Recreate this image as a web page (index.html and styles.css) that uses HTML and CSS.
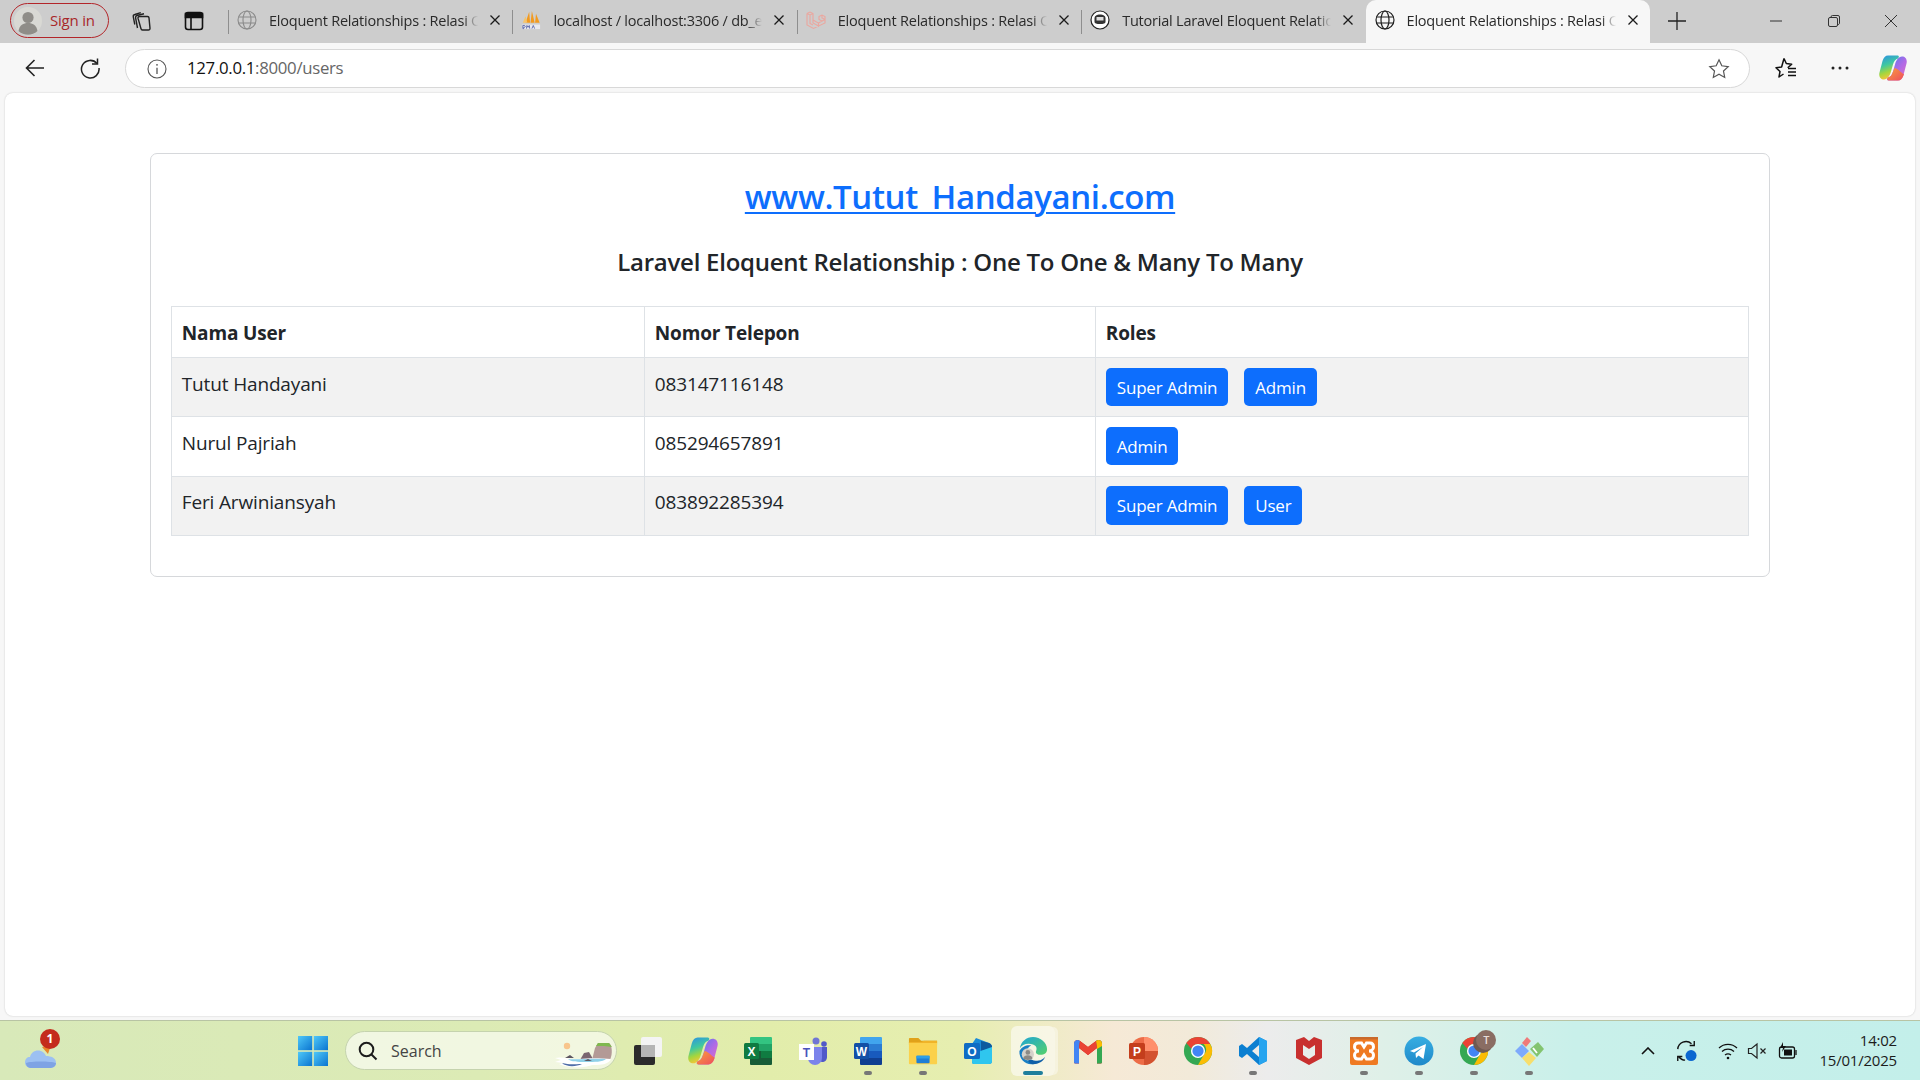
FILE: index.html
```html
<!DOCTYPE html>
<html lang="id">
<head>
<meta charset="utf-8">
<title>Eloquent Relationships</title>
<link rel="stylesheet" href="styles.css">
</head>
<body>
<div class="tabstrip">
  <div class="signin">
    <svg class="avatar" viewBox="0 0 28 28"><circle cx="14" cy="14" r="14" fill="#d9d9d4"/><circle cx="14" cy="10.5" r="5.6" fill="#8f8d88"/><path d="M4.500 24c1-6 5-8 9.500-8s8.500 2 9.500 8a14 14 0 0 1-19 0z" fill="#8f8d88"/></svg>
    <span class="signin-text">Sign in</span>
  </div>
  <svg class="tool tool-coll" viewBox="0 0 24 24" fill="none" stroke="#222" stroke-width="1.400"><path d="M9.500 7.500h8a1.500 1.500 0 0 1 1.500 1.400l1 10.500a1.500 1.500 0 0 1-1.500 1.600h-6a1.500 1.500 0 0 1-1.500-1.300L8 9.200a1.500 1.500 0 0 1 1.500-1.700z"/><path d="M7.500 19 5.600 8.800A2 2 0 0 1 7 6.500l7-1.700M4.800 15.500 3.300 7.800a2 2 0 0 1 1.500-2.300l6-1.800"/></svg>
  <svg class="tool tool-vert" viewBox="0 0 24 24" fill="none" stroke="#111" stroke-width="1.600"><rect x="3.500" y="3.500" width="17" height="17" rx="2.500"/><path d="M3.500 4.500h17v4h-17z" fill="#111"/><path d="M9 8v12"/></svg>
  <div class="tab">
    <svg class="fav" viewBox="0 0 20 20" fill="none" stroke="#8a8a8a" stroke-width="1.100"><circle cx="10" cy="10" r="9"/><ellipse cx="10" cy="10" rx="4" ry="9"/><path d="M1.500 7h17M1.500 13h17"/></svg>
    <span class="tab-title">Eloquent Relationships : Relasi One To One</span>
    <svg class="tab-x" viewBox="0 0 12 12"><path d="M1.500 1.500l9 9m0-9l-9 9" stroke="#1a1a1a" stroke-width="1.300"/></svg>
  </div>
  <div class="tab">
    <svg class="fav" viewBox="0 0 22 22"><path d="M5 14 9 2l1 12zM10.500 14l1.500-13 3 13zM15.500 14l1-10 4 10z" fill="#f29a1f"/><path d="M2 14 5 7l2 7z" fill="#f7c469"/><path d="M1 16h20v5H1z" fill="#e9e9ee"/><path d="M2 20.500V17h2l.7 1-.7 1H3v1.500zM6 20.500 6.500 17l1.300 2 1.300-2 .5 3.500M12 20.500l1.500-3.500 1.500 3.500" fill="none" stroke="#3a4a9a" stroke-width=".8"/></svg>
    <span class="tab-title">localhost / localhost:3306 / db_eloquent</span>
    <svg class="tab-x" viewBox="0 0 12 12"><path d="M1.500 1.500l9 9m0-9l-9 9" stroke="#1a1a1a" stroke-width="1.300"/></svg>
  </div>
  <div class="tab">
    <svg class="fav" viewBox="0 0 20 20" fill="none" stroke="#eba79f" stroke-width="1.100"><path d="M1 3.500 4 2l3 1.500V13l5.500 3V13l-5.500-3M1 3.500V15l6.500 3.500L19 13V9.500l-6.500 3.500M7 3.500 4 5 1 3.500M4 5v8.500l3 1.500M13 6.500 16 5l3 1.500v3l-3 1.500-3-1.500zM16 5v3l3 1.500M13 6.500V9.500l3 1.500"/></svg>
    <span class="tab-title">Eloquent Relationships : Relasi One To One</span>
    <svg class="tab-x" viewBox="0 0 12 12"><path d="M1.500 1.500l9 9m0-9l-9 9" stroke="#1a1a1a" stroke-width="1.300"/></svg>
  </div>
  <div class="tab">
    <svg class="fav" viewBox="0 0 20 20"><circle cx="10" cy="10" r="9" fill="#fff" stroke="#222" stroke-width="1.200"/><path d="M4.500 8.500C4.500 5.500 7 4.500 10 4.500s5.500 1 5.500 4V12c0 1.500-2 2-5.500 2s-5.500-.5-5.500-2z" fill="#333"/><rect x="6.500" y="7" width="7" height="3.500" fill="#ddd"/></svg>
    <span class="tab-title">Tutorial Laravel Eloquent Relationship</span>
    <svg class="tab-x" viewBox="0 0 12 12"><path d="M1.500 1.500l9 9m0-9l-9 9" stroke="#1a1a1a" stroke-width="1.300"/></svg>
  </div>
  <div class="tab tab-active">
    <svg class="fav" viewBox="0 0 20 20" fill="none" stroke="#1e1e1e" stroke-width="1.200"><circle cx="10" cy="10" r="9"/><ellipse cx="10" cy="10" rx="4" ry="9"/><path d="M1.500 7h17M1.500 13h17"/></svg>
    <span class="tab-title">Eloquent Relationships : Relasi One To One</span>
    <svg class="tab-x" viewBox="0 0 12 12"><path d="M1.500 1.500l9 9m0-9l-9 9" stroke="#1a1a1a" stroke-width="1.300"/></svg>
  </div>
  <svg class="newtab" viewBox="0 0 18 18"><path d="M9 0v18M0 9h18" stroke="#222" stroke-width="1.300"/></svg>
  <div class="winctl">
    <svg viewBox="0 0 14 14"><path d="M1 7h12" stroke="#333" stroke-width="1"/></svg>
    <svg viewBox="0 0 14 14" fill="none" stroke="#333" stroke-width="1"><rect x="1.500" y="3.500" width="9" height="9" rx="1.500"/><path d="M4 3.500V3a1.500 1.500 0 0 1 1.500-1.500H11A1.500 1.500 0 0 1 12.500 3v6a1.500 1.500 0 0 1-2 1.500"/></svg>
    <svg viewBox="0 0 14 14"><path d="M1 1l12 12m0-12L1 13" stroke="#333" stroke-width="1"/></svg>
  </div>
</div>

<div class="toolbar">
  <svg class="nav nav-back" viewBox="0 0 22 22"><path d="M20 11H2.500M10.500 3l-8 8 8 8" fill="none" stroke="#222" stroke-width="1.600"/></svg>
  <svg class="nav nav-reload" viewBox="0 0 22 22" fill="none" stroke="#222" stroke-width="1.500"><path d="M18 6.500A8.800 8.800 0 1 0 20 11"/><path d="M18.500 1.500v5.500H13"/></svg>
  <div class="omnibox">
    <svg class="info" viewBox="0 0 20 20" fill="none" stroke="#555" stroke-width="1.100"><circle cx="10" cy="10" r="9"/><path d="M10 8.800V15" stroke-width="1.300"/><circle cx="10" cy="5.800" r=".9" fill="#555" stroke="none"/></svg>
    <span class="url"><span class="url-host">127.0.0.1</span>:8000/users</span>
    <svg class="star" viewBox="0 0 22 22" fill="none" stroke="#555" stroke-width="1.200"><path d="M11 1.800l2.800 6 6.400.8-4.700 4.400 1.200 6.400-5.700-3.200-5.700 3.200 1.200-6.400L1.800 8.600l6.400-.8z"/></svg>
  </div>
  <svg class="nav nav-favs" viewBox="0 0 24 24" fill="none" stroke="#111" stroke-width="1.500"><path d="M10 2.500l2.300 5 5.400.7-4 3.600M9.500 18l-4.500 3 1-5.500-4-3.800 5.600-.7L10 2.500" stroke-linejoin="round"/><path d="M14 12.500h8M14 16h8M14 19.500h8"/></svg>
  <svg class="nav nav-more" viewBox="0 0 20 6"><circle cx="3" cy="3" r="1.500" fill="#222"/><circle cx="10" cy="3" r="1.500" fill="#222"/><circle cx="17" cy="3" r="1.500" fill="#222"/></svg>
  <svg class="nav nav-copilot" viewBox="0 0 28 26"><defs><linearGradient id="cp1" x1="0" y1="0" x2=".3" y2="1"><stop offset="0" stop-color="#2a8ee8"/><stop offset=".45" stop-color="#3fc8a0"/><stop offset=".75" stop-color="#a6d63c"/><stop offset="1" stop-color="#f4c53a"/></linearGradient><linearGradient id="cp2" x1="0" y1="0" x2="1" y2="1"><stop offset="0" stop-color="#3f7cf0"/><stop offset=".55" stop-color="#b06ae6"/><stop offset="1" stop-color="#e86fc0"/></linearGradient><linearGradient id="cp3" x1="0" y1="0" x2="1" y2="1"><stop offset="0" stop-color="#f9a13a"/><stop offset="1" stop-color="#ee4d5f"/></linearGradient></defs><path d="M9 .5h9c2 0 2.500 1.500 1 3-2.500.5-4 2.500-5 6l-2 7c-1 4-3.500 8-7 8-3.500 0-5.500-3-4.500-7L3.500 6C4.500 2.500 6.500.5 9 .5z" fill="url(#cp1)"/><path d="M19 25.500h-9c-2 0-2.500-1.500-1-3 2.500-.5 4-2.500 5-6l2-7c1-4 3.500-8 7-8 3.500 0 5.500 3 4.500 7L24.500 20c-1 3.500-3 5.500-5.500 5.500z" fill="url(#cp2)"/><path d="M15.500 13l-1.500 3.500c-1 3.500-2.500 5.500-5 6-1.500 1.500-1 3 1 3h9c2.500 0 4.500-2 5.500-5l.5-1.500c-2 0-5-5-9.500-6z" fill="url(#cp3)"/></svg>
</div>

<main class="viewport">
  <section class="card">
    <h2 class="brand"><a href="#">www.Tutut_Handayani.com</a></h2>
    <h4 class="subtitle">Laravel Eloquent Relationship : One To One &amp; Many To Many</h4>
    <table class="users">
      <colgroup><col class="c1"><col class="c2"><col></colgroup>
      <thead><tr><th>Nama User</th><th>Nomor Telepon</th><th>Roles</th></tr></thead>
      <tbody>
        <tr><td>Tutut Handayani</td><td>083147116148</td><td><span class="badge">Super Admin</span><span class="badge">Admin</span></td></tr>
        <tr><td>Nurul Pajriah</td><td>085294657891</td><td><span class="badge">Admin</span></td></tr>
        <tr><td>Feri Arwiniansyah</td><td>083892285394</td><td><span class="badge">Super Admin</span><span class="badge">User</span></td></tr>
      </tbody>
    </table>
  </section>
</main>

<footer class="taskbar">
  <div class="weather">
    <svg viewBox="0 0 32 36"><path d="M17 12l9-2-3 9z" fill="#e8862c"/><path d="M7 33c-4 0-7-2-7-5.500s2-5.500 5-5.500c1-4 4-6.500 8-6.500s7 2.500 8 5.500c5 0 10 2 10 6.500s-3 5.500-7 5.500z" fill="#9cc0f2"/><path d="M1 28c5-2 24-2 30 0 0 3-3 5-7 5H7c-4 0-6-2-6-5z" fill="#7ea3e4"/></svg>
    <span class="weather-badge">1</span>
  </div>
  <svg class="start" viewBox="0 0 30 30"><defs><linearGradient id="st" x1="0" y1="0" x2="1" y2="1"><stop offset="0" stop-color="#4fc8f8"/><stop offset="1" stop-color="#0a74d0"/></linearGradient></defs><rect width="14.200" height="14.200" y="0" fill="url(#st)"/><rect x="15.800" width="14.200" height="14.200" fill="url(#st)"/><rect y="15.800" width="14.200" height="14.200" fill="url(#st)"/><rect x="15.800" y="15.800" width="14.200" height="14.200" fill="url(#st)"/></svg>
  <div class="search">
    <svg class="search-ico" viewBox="0 0 20 20" fill="none" stroke="#1c1c1c" stroke-width="2"><circle cx="8.500" cy="8.500" r="6.800"/><path d="M13.500 13.500l5 5"/></svg>
    <span>Search</span>
    <svg class="scene" viewBox="0 0 60 27"><circle cx="13" cy="5" r="3.200" fill="#f8c58c"/><path d="M26 19l4-7 5-1 4 7z" fill="#7a6670"/><path d="M38 19l3-12 3-5h11c3 2 4 10 1 17z" fill="#b39a96"/><path d="M42 5l2-3h11l3 4-8-1z" fill="#7fb84e"/><path d="M1 17c8-2 16 2 24 1s22-1 32 0c-2 5-9 6-18 6-5 1-9 3-20 2-5 0-10-1-14-3l5-1-9-1 6-2z" fill="#fff"/><path d="M14 18c8 1 30-1 38 0-3 3-12 3-20 3s-15 0-18-3z" fill="#8fd0e8"/><path d="M8 22c8 2 12 1 20 1-6 3-16 3-20-1z" fill="#4f6da8"/><path d="M11 17l5-3 4 3zM30 20l4-2 4 2z" fill="#5c5560"/></svg>
  </div>
  <div class="apps">
    <div class="app"><svg viewBox="0 0 30 30"><rect x="1" y="9" width="21" height="20" rx="2" fill="#2b2b2b"/><rect x="8" y="1" width="21" height="20" rx="2" fill="#f4f4f4"/><rect x="8" y="9" width="14" height="12" fill="#b5b5b5"/></svg></div>
    <div class="app"><svg viewBox="0 0 28 26"><path d="M9 .5h9c2 0 2.500 1.500 1 3-2.500.5-4 2.500-5 6l-2 7c-1 4-3.500 8-7 8-3.500 0-5.500-3-4.500-7L3.500 6C4.500 2.500 6.500.5 9 .5z" fill="url(#cp1)"/><path d="M19 25.500h-9c-2 0-2.500-1.500-1-3 2.500-.5 4-2.500 5-6l2-7c1-4 3.500-8 7-8 3.500 0 5.500 3 4.500 7L24.500 20c-1 3.500-3 5.500-5.500 5.500z" fill="url(#cp2)"/><path d="M15.500 13l-1.500 3.500c-1 3.500-2.500 5.500-5 6-1.500 1.500-1 3 1 3h9c2.500 0 4.500-2 5.500-5l.5-1.500c-2 0-5-5-9.500-6z" fill="url(#cp3)"/></svg></div>
    <div class="app"><svg viewBox="0 0 30 30"><path d="M8 1h20a1 1 0 0 1 1 1v6H7V2a1 1 0 0 1 1-1z" fill="#33c481"/><path d="M7 8h22v7H7z" fill="#21a366"/><path d="M18 15h11v7H18z" fill="#107c41"/><path d="M7 15h11v7H7zM7 22h22v6a1 1 0 0 1-1 1H8a1 1 0 0 1-1-1z" fill="#185c37"/><rect x="1" y="7" width="15" height="16" rx="1.500" fill="#0f7b41"/><text x="8.500" y="19.500" class="ltr">X</text></svg></div>
    <div class="app"><svg viewBox="0 0 30 30"><circle cx="18" cy="5" r="3.500" fill="#6f76d4"/><circle cx="26" cy="8" r="2.800" fill="#5059c9"/><path d="M21 11h8v10c0 3-2 5-5 5-1 0-3-1-3-2z" fill="#5059c9"/><path d="M10 11h14v11a7 7 0 0 1-14 0z" fill="#7b83eb"/><rect x="1" y="8" width="15" height="16" fill="#fff"/><text x="8.500" y="20.500" class="ltr ltr-t">T</text></svg></div>
    <div class="app"><svg viewBox="0 0 30 30"><path d="M8 1h20a1 1 0 0 1 1 1v6H7V2a1 1 0 0 1 1-1z" fill="#41a5ee"/><path d="M7 8h22v7H7z" fill="#2b7cd3"/><path d="M7 15h22v7H7z" fill="#185abd"/><path d="M7 22h22v6a1 1 0 0 1-1 1H8a1 1 0 0 1-1-1z" fill="#103f91"/><rect x="1" y="7" width="15" height="16" rx="1.500" fill="#134fa6"/><text x="8.500" y="19.500" class="ltr">W</text></svg><i class="dot"></i></div>
    <div class="app"><svg viewBox="0 0 32 32"><path d="M1 3a1 1 0 0 1 1-1h9l3 3h17v4H1z" fill="#e0a21a"/><path d="M1 7h30v22a1 1 0 0 1-1 1H2a1 1 0 0 1-1-1z" fill="#fbd14b"/><path d="M1 6.500h13l3-1.500h14v2.500H1z" fill="#f0b429"/><rect x="9" y="21" width="14" height="8" rx="1" fill="#1f7fd6"/><rect x="9" y="21" width="14" height="3" fill="#2e9fe8"/></svg><i class="dot"></i></div>
    <div class="app"><svg viewBox="0 0 30 30"><path d="M13 2 26 7c2 1 3 2 3 4v14c0 2-1 3-3 3H11c-2 0-2-2-2-3V8z" fill="#1a8bd8"/><path d="M18 5l8 2c2 1 3 2 3 4v1l-11 3z" fill="#0e5a9e"/><path d="M9 18l20-7v14c0 2-1 3-3 3H11c-2 0-2-2-2-3z" fill="#2fc6ee"/><rect x="1" y="7" width="16" height="16" rx="1.500" fill="#0f6cc4"/><text x="9" y="20" class="ltr">O</text></svg></div>
    <div class="app app-active"><svg viewBox="0 0 32 32"><defs><linearGradient id="ed1" x1="0" y1="0" x2="1" y2="1"><stop offset="0" stop-color="#1fa5d6"/><stop offset="1" stop-color="#54d16a"/></linearGradient></defs><path d="M2 13C3 6 9 1 16 1c8 0 15 6 15 13 0 4-3 6-7 6-3 0-5-1-5-3 1-3 2-6-3-8C10 7 4 9 2 13z" fill="url(#ed1)"/><path d="M16 30C8 31 1 25 1.500 16 4 11 10 9 14 10c-5 2-6 9-3 13 1 3 4 6 9 6z" fill="#1a7fc4"/><path d="M11 23c3 3 7 4 11 3 3 0 5-2 7-4-2 5-7 8-13 8-3 0-6-2-5-7z" fill="#0f5fa8"/><circle cx="10.500" cy="19.500" r="6.500" fill="#d4d1ca"/><circle cx="10.500" cy="17.500" r="2.500" fill="#8c8a85"/><path d="M5.500 24c.5-2.500 2.500-3.500 5-3.500s4.500 1 5 3.500c-2 2-8 2-10 0z" fill="#8c8a85"/></svg><i class="dot dot-long"></i></div>
    <div class="app"><svg viewBox="0 0 30 26"><path d="M1 5.500C1 2.500 4.500 1 7 3l8 6 8-6c2.500-2 6-.5 6 2.500V24a1.500 1.500 0 0 1-1.500 1.500H24V10l-9 7-9-7v15.500H2.500A1.500 1.500 0 0 1 1 24z" fill="#c5221f"/><path d="M1 5.500C1 2.500 4.500 1 7 3l-1 7v15.500H2.500A1.500 1.500 0 0 1 1 24z" fill="#4285f4"/><path d="M29 5.500C29 2.500 25.500 1 23 3l1 7v15.500h3.500A1.500 1.500 0 0 0 29 24z" fill="#34a853"/><path d="M23 3c2.500-2 6-.5 6 2.500V8l-5 3z" fill="#fbbc04"/><path d="M7 3l8 6 8-6 1 7-9 7-9-7z" fill="#ea4335"/></svg></div>
    <div class="app"><svg viewBox="0 0 30 30"><circle cx="16" cy="15" r="14" fill="#ed6c47"/><path d="M16 1a14 14 0 0 1 14 14H16z" fill="#ff8f6b"/><path d="M16 15h14a14 14 0 0 1-14 14z" fill="#d35230"/><rect x="1" y="7" width="16" height="16" rx="1.500" fill="#c43e1c"/><text x="9" y="20" class="ltr">P</text></svg></div>
    <div class="app"><svg viewBox="0 0 32 32"><circle cx="16" cy="16" r="15" fill="#34a853"/><path d="M16 1a15 15 0 0 1 13 7.500H16a7.500 7.500 0 0 0-7 5L3.500 7.500A15 15 0 0 1 16 1z" fill="#ea4335"/><path d="M29 8.500A15 15 0 0 1 16 31l6.500-11.500A7.500 7.500 0 0 0 22 8.500z" fill="#fbbc04"/><circle cx="16" cy="16" r="7.500" fill="#fff"/><circle cx="16" cy="16" r="6" fill="#4285f4"/></svg></div>
    <div class="app"><svg viewBox="0 0 30 30"><path d="M21 1l8 4v20l-8 4-12-11-5 4-3-2V10l3-2 5 4zM21 9l-7 6 7 6z" fill="#0b7fd1"/><path d="M21 1l8 4v20l-8 4z" fill="#27a4ef"/></svg><i class="dot"></i></div>
    <div class="app"><svg viewBox="0 0 28 30"><path fill-rule="evenodd" d="M1 4l8-3 5 4 5-4 8 3v18l-13 7-13-7zM8 9v10l6 4 6-4V9l-6 4z" fill="#c8302f"/></svg></div>
    <div class="app"><svg viewBox="0 0 30 30"><rect x="1" y="1" width="28" height="28" rx="2" fill="#ef7a22"/><rect x="1" y="1" width="28" height="2.500" fill="#c96a2c"/><path d="M9 7h3.500L15 11l2.500-4H21c2.500 0 3.500 2 3.500 4s-2 4-4.500 4c2.500 0 4.500 2 4.500 4s-1 4-3.500 4h-3.500L15 19l-2.500 4H9c-2.500 0-3.500-2-3.500-4s2-4 4.500-4c-2.500 0-4.500-2-4.500-4s1-4 3.500-4z" fill="none" stroke="#fff" stroke-width="3"/></svg><i class="dot"></i></div>
    <div class="app"><svg viewBox="0 0 30 30"><defs><linearGradient id="tg" x1="0" y1="0" x2="0" y2="1"><stop offset="0" stop-color="#37aee2"/><stop offset="1" stop-color="#1e88c9"/></linearGradient></defs><circle cx="15" cy="15" r="14.500" fill="url(#tg)"/><path d="M6 15l16-7-2.500 15-5-3.500-2.500 2.500-.5-4.500 7.500-6.500-9 5.500z" fill="#fff"/></svg><i class="dot"></i></div>
    <div class="app"><svg viewBox="0 0 32 32"><circle cx="16" cy="16" r="15" fill="#34a853"/><path d="M16 1a15 15 0 0 1 13 7.500H16a7.500 7.500 0 0 0-7 5L3.500 7.500A15 15 0 0 1 16 1z" fill="#ea4335"/><path d="M29 8.500A15 15 0 0 1 16 31l6.500-11.500A7.500 7.500 0 0 0 22 8.500z" fill="#fbbc04"/><circle cx="16" cy="16" r="7.500" fill="#fff"/><circle cx="16" cy="16" r="6" fill="#4285f4"/></svg><span class="t-badge">T</span><i class="dot"></i></div>
    <div class="app"><svg viewBox="0 0 30 30"><path d="M1 15l7-7 7 7-7 7z" fill="#7eaafb"/><path d="M8 7l5-6 4 4-5 6z" fill="#ef7a7a"/><path d="M16 13l8-7 6 7-7 8z" fill="#83c46f"/><path d="M8 22l7-6 7 6-7 8z" fill="#f7de6c"/><path d="M19 12l4 5" stroke="#fff" stroke-width="1.800"/></svg><i class="dot"></i></div>
  </div>
  <div class="tray">
    <svg class="tray-chev" viewBox="0 0 14 8"><path d="M1 7l6-6 6 6" fill="none" stroke="#111" stroke-width="1.600"/></svg>
    <svg class="tray-sync" viewBox="0 0 24 26" fill="none" stroke="#111" stroke-width="1.500"><path d="M3 11A9 9 0 0 1 18 5M21 2v5h-5M3 24v-5h5M4 19c1.500 2 4 4 7 4"/><circle cx="17.500" cy="18" r="6" fill="#0b66d0" stroke="none"/></svg>
    <svg class="tray-wifi" viewBox="0 0 20 18" fill="none" stroke="#111" stroke-width="1.300"><path d="M1 6a13 13 0 0 1 18 0M4 9.500a9 9 0 0 1 12 0M7 13a5 5 0 0 1 6 0"/><circle cx="10" cy="16" r="1.300" fill="#111" stroke="none"/></svg>
    <svg class="tray-vol" viewBox="0 0 20 18" fill="none" stroke="#222" stroke-width="1.200"><path d="M1.500 6.500h3L10 2v14l-5.500-4.500h-3z"/><path d="M13.500 6.500l5 5m0-5l-5 5"/></svg>
    <svg class="tray-bat" viewBox="0 0 20 18" fill="none" stroke="#111" stroke-width="1.300"><rect x="1.500" y="5" width="15" height="11" rx="2"/><path d="M18 8v5"/><rect x="6" y="7.500" width="8" height="6" fill="#111" stroke="none"/><path d="M5 0 2 6h3l-1 4 4-6H5z" fill="#111" stroke="none"/></svg>
    <div class="clock"><span>14:02</span><span>15/01/2025</span></div>
  </div>
</footer>
</body>
</html>
```
FILE: styles.css
```css
* { box-sizing: border-box; }
html, body { margin: 0; height: 100%; }
body {
  width: 1920px; height: 1080px; overflow: hidden;
  background: #f7f7f7;
  font-family: "Open Sans", "Noto Sans", sans-serif;
  color: #212529;
  display: flex; flex-direction: column;
}
svg { display: block; flex: none; }

/* tab strip */
.tabstrip { height: 43px; background: #cdcdcd; display: flex; align-items: center; padding-left: 10px; flex: none; }
.signin { width: 99px; height: 35px; margin-top: -2px; border: 1.5px solid #b3262a; border-radius: 18px; display: flex; align-items: center; gap: 8px; padding-left: 3px; color: #a8282b; font-size: 15px; letter-spacing: -.2px; }
.signin-text { padding-bottom: 2px; }
.avatar { width: 28px; height: 28px; }
.tool { width: 24px; height: 24px; margin-top: -2px; }
.tool-coll { margin-left: 21px; }
.tool-vert { margin-left: 28px; margin-right: 22px; }
.tab { width: 284.400px; height: 43px; flex: none; display: flex; align-items: center; padding: 0 0 3px 9px; position: relative; }
.tab::before { content: ""; position: absolute; left: 0; top: 10px; height: 24px; border-left: 1.5px solid #8e8e8e; }
.fav { width: 20px; height: 20px; }
.tab-title { margin-left: 12px; width: 209px; white-space: nowrap; overflow: hidden; font-size: 14.500px; letter-spacing: -.22px; color: #2a2a2a;
  -webkit-mask-image: linear-gradient(90deg, #000 93%, transparent 100%); mask-image: linear-gradient(90deg, #000 93%, transparent 100%); }
.tab-x { width: 12px; height: 12px; margin-left: 11px; }
.tab-active { background: #f7f7f7; border-radius: 10px 10px 0 0; }
.tab-active::before { display: none; }
.newtab { width: 18px; height: 18px; margin-left: 18px; margin-top: -2px; }
.winctl { margin-left: auto; margin-top: -2px; width: 151px; padding-right: 22px; display: flex; justify-content: space-between; }
.winctl svg { width: 14px; height: 14px; }

/* toolbar */
.toolbar { height: 50px; flex: none; display: flex; align-items: center; background: #f7f7f7; }
.nav-back { width: 22px; height: 22px; margin-left: 24px; }
.nav-reload { width: 22px; height: 22px; margin-left: 33px; }
.omnibox { margin-left: 24px; width: 1625px; height: 39px; margin-top: 1px; background: #fff; border: 1.5px solid #d8d8d8; border-left-width: 1px; border-radius: 20px; display: flex; align-items: center; padding-left: 21px; }
.info { width: 20px; height: 20px; }
.url { margin-left: 20px; padding-bottom: 2px; font-size: 16.800px; letter-spacing: -.3px; color: #666; flex: 1; }
.url-host { color: #111; }
.star { width: 22px; height: 22px; margin-right: 19px; }
.nav-favs { width: 24px; height: 24px; margin-left: 24px; }
.nav-more { width: 20px; height: 6px; margin-left: 32px; }
.nav-copilot { width: 28px; height: 26px; margin-left: 29px; }

/* viewport */
.viewport { margin: 0 5px; height: 923px; flex: none; background: #fff; border-radius: 8px; box-shadow: 0 0 2px rgba(0,0,0,.2); padding: 60px 145px 0; }
.card { border: 1.200px solid #d6d8db; border-radius: 7px; padding: 0 20.200px 42px; height: 424px; background: #fff; }
.brand { margin: 0; height: 86px; padding-top: 21px; text-align: center; font-size: 33px; font-weight: 600; line-height: 43px; letter-spacing: -.38px; }
.brand a { color: #0d6efd; text-decoration-thickness: 2px; text-underline-offset: 3px; }
.subtitle { margin: 0; height: 66px; text-align: center; font-size: 24px; font-weight: 600; line-height: 44px; letter-spacing: -.25px; color: #212529; }
.users { width: 100%; border-collapse: collapse; table-layout: fixed; font-size: 19px; letter-spacing: -.15px; }
.c1 { width: 473px; }
.c2 { width: 451px; }
.users th, .users td { border: 1.200px solid #dee2e6; padding: 9.600px; text-align: left; vertical-align: top; line-height: 32px; }
.users th { font-weight: 700; padding-top: 10px; padding-bottom: 8px; height: 51px; }
.users tbody tr:nth-child(odd) td { background: #f2f2f2; }
.users td { height: 59.300px; }
.badge { display: inline-block; height: 38.400px; line-height: 39px; padding: 0 11px; background: #0d6efd; color: #fff; border-radius: 5px; font-size: 17px; letter-spacing: -.2px; margin-right: 16px; vertical-align: top; }

/* taskbar */
.taskbar { margin-top: 4px; height: 60px; flex: 1; border-top: 1px solid #b8c4a4; display: flex; align-items: center; position: relative;
  background: linear-gradient(90deg, #d8e9b9 0%, #dcebb5 25%, #e2edab 40%, #e6eeb0 50%, #f6e9d6 58%, #f2ead9 62%, #ececec 66%, #dff0e8 72%, #c9f0ea 82%, #c3efea 100%); }
.weather { width: 34px; height: 40px; margin-left: 25px; position: relative; }
.weather svg { width: 32px; height: 36px; margin-top: 4px; }
.weather-badge { position: absolute; left: 15px; top: -2px; width: 20px; height: 20px; border-radius: 50%; background: #c42b1c; color: #fff; font-size: 12px; font-weight: 700; text-align: center; line-height: 20px; }
.start { width: 30px; height: 30px; margin-left: 239px; }
.search { width: 272px; height: 39px; margin-left: 17px; background: rgba(255,255,255,.6); border: 1px solid #c5d3ae; border-radius: 20px; display: flex; align-items: center; padding-left: 12px; color: #444; font-size: 16px; position: relative; }
.search-ico { width: 20px; height: 20px; margin-right: 13px; }
.scene { position: absolute; right: 2px; bottom: 1px; width: 60px; height: 27px; }
.apps { display: flex; margin-left: 3px; }
.app { width: 55.100px; height: 50px; display: flex; align-items: center; justify-content: center; position: relative; }
.app svg { width: 30px; height: 30px; }
.app-active { background: rgba(255,255,255,.55); border-radius: 6px; width: 44px; margin: 0 5.500px; box-shadow: 4px 0 0 -1px rgba(255,255,255,.4); }
.dot { position: absolute; left: 50%; bottom: 1px; width: 8px; height: 4px; margin-left: -4px; background: #777; border-radius: 2px; }
.dot-long { width: 20px; margin-left: -10px; background: #1f7f9c; }
.t-badge { position: absolute; left: 30px; top: 4px; width: 20px; height: 20px; border-radius: 50%; background: #8a6d63; box-shadow: -3px 3px 0 #6f5a52; color: #e8dcd8; font-size: 11px; font-weight: 600; text-align: center; line-height: 20px; }
.ltr { font: 700 12px "Liberation Sans", sans-serif; fill: #fff; text-anchor: middle; }
.ltr-t { fill: #4b53bc; }
.tray { position: absolute; right: 0; top: 0; height: 59px; width: 287px; display: flex; align-items: center; }
.tray-chev { width: 14px; height: 8px; margin-left: 8px; }
.tray-sync { width: 22px; height: 24px; margin-left: 20px; }
.tray-wifi { width: 20px; height: 18px; margin-left: 21px; }
.tray-vol { width: 20px; height: 18px; margin-left: 9px; }
.tray-bat { width: 20px; height: 18px; margin-left: 11px; }
.clock { margin-left: auto; margin-top: -1px; margin-right: 23px; display: flex; flex-direction: column; align-items: flex-end; font-size: 15px; letter-spacing: -.2px; line-height: 20px; color: #1c1c1c; }
```
